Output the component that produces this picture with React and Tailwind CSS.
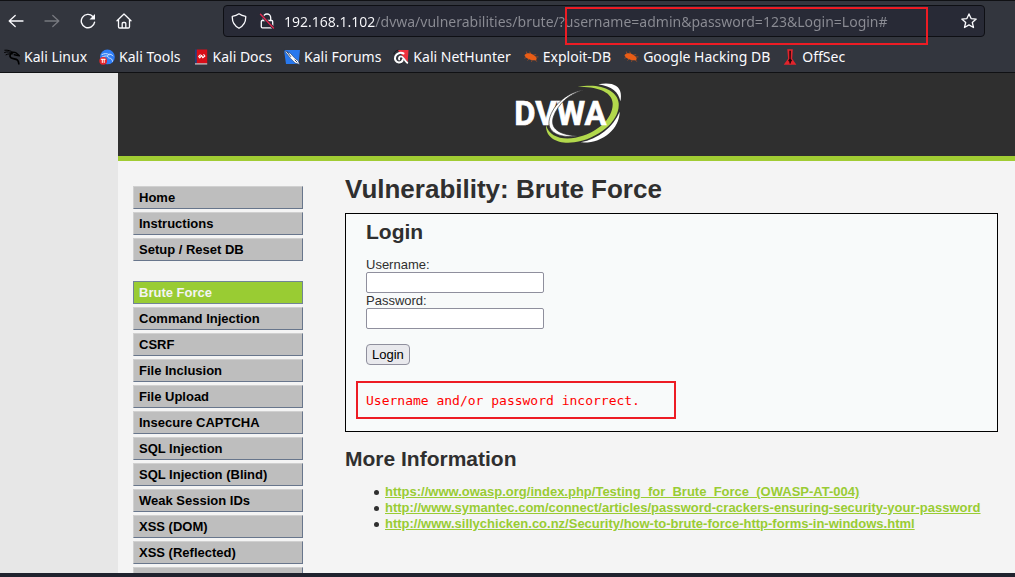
import React from "react";

const menuGroups = [
  ["Home", "Instructions", "Setup / Reset DB"],
  [
    "Brute Force",
    "Command Injection",
    "CSRF",
    "File Inclusion",
    "File Upload",
    "Insecure CAPTCHA",
    "SQL Injection",
    "SQL Injection (Blind)",
    "Weak Session IDs",
    "XSS (DOM)",
    "XSS (Reflected)",
    "",
  ],
];

const references = [
  "https://www.owasp.org/index.php/Testing_for_Brute_Force_(OWASP-AT-004)",
  "http://www.symantec.com/connect/articles/password-crackers-ensuring-security-your-password",
  "http://www.sillychicken.co.nz/Security/how-to-brute-force-http-forms-in-windows.html",
];

function Icon({ children, className = "" }) {
  return (
    <svg
      viewBox="0 0 16 16"
      aria-hidden="true"
      className={`size-4 shrink-0 ${className}`}
      fill="none"
      stroke="currentColor"
      strokeWidth="1.3"
      strokeLinecap="round"
      strokeLinejoin="round"
    >
      {children}
    </svg>
  );
}

function KaliIcon() {
  return (
    <Icon className="text-black">
      <path d="M.8 1.2C4 .9 7 1.7 9.3 3.6M.6 3.4c2.600-.9 5.400-.7 8 .8M2 5.800c2-1 4-1.200 6.300-.8" strokeWidth="1" />
      <path d="M8 3.600C6 5 5.300 7.200 6.800 8.700c1.700 1.600 5 .8 6.700 2.400 1 .9 1.200 2.200 1.300 3.700" strokeWidth="1.700" />
      <path d="M8.600 3.400c1.700-.3 3.400.1 4.600 1.400l2.200 1.900-2.800-.5-2.300-.5" strokeWidth="1.500" />
    </Icon>
  );
}

function ToolsIcon() {
  return (
    <Icon>
      <circle cx="8.400" cy="7.900" r="7.400" fill="#2f7df6" stroke="none" />
      <path d="M3 5.500c2.500-1.300 5.200-1.200 7.200.2M3.300 8c1.800-1 3.600-1.300 5.500-.9M9.500 5.600c-1.700 1.600-.8 3.200 1 3.500 1.900.3 2.900 1.300 3 3.200M10 5.200c1.400-.3 2.800.4 3.900 1.700" stroke="#cfe4ff" strokeWidth="1" />
      <circle cx="4.200" cy="11.800" r="3.900" fill="#e3262b" stroke="none" />
      <path d="M2.200 10.300h4M3.300 10.300v3.200M5.200 10.300v3.200" stroke="#fff" strokeWidth="1" />
    </Icon>
  );
}

function DocsIcon() {
  return (
    <Icon>
      <path d="M2 .5h2v14H2z" fill="#23407c" stroke="none" />
      <path d="M3.800.5h10.400v14H3.800z" fill="#d80d18" stroke="none" />
      <path d="M2 14.300h12.200v1.200H2z" fill="#d9c9cc" stroke="none" />
      <path d="M7.300 5.800 5.700 7.400l1.100 1.400 1.900-2.400 1 2.400 2.200-1.800-1.100-1.400" stroke="#fff" strokeWidth="1.100" />
    </Icon>
  );
}

function ForumsIcon() {
  return (
    <Icon>
      <path d="M0 1h16l-1.500 14H2z" fill="#2878ee" stroke="none" />
      <path d="M.2 1.300 6.500 4.400l4.700 5.200 3 2.200 1.500 3.600-4.500-1.400-4.700-4.600-3.600-4.500L.2 1.300z" fill="#fff" stroke="#17335f" strokeWidth=".6" />
      <path d="m3.200 3 3.500 4.500M11 11l2 2" stroke="#1d3157" strokeWidth=".9" />
    </Icon>
  );
}

function NetHunterIcon() {
  return (
    <Icon>
      <path d="M4.500 1h11l-.8 12z" fill="#f0323c" stroke="none" />
      <path d="M.8 4.800C1.500 2.900 3 1.500 5 1.200M9 14l-2.500 1.200" stroke="#16171b" strokeWidth="1" />
      <path d="M10.500 4.500C7.500 3 3.500 4.200 2.300 7.400c-1 2.900.6 5.900 3.500 6.100 2.300.1 3.700-1.300 4-2.900" stroke="#fff" strokeWidth="2" />
      <path d="M6.200 10.500c-.7-1.700.3-3.200 1.900-3.200 2.200 0 2.900 3.600 6.200 6.500" stroke="#fff" strokeWidth="1.800" />
    </Icon>
  );
}

function BugIcon() {
  return (
    <Icon className="text-[#e95d16]">
      <path d="M1.500 6C3.500 3.700 7 3.600 9.800 5.400c2 1.300 4 2.700 3.900 4.300-.1 1.700-2.500 2-5 1.300C5.300 10.200 2 8.600 1.500 6z" fill="currentColor" stroke="none" />
      <path d="m4 5-.5-2M7.500 5l-.6-2M10.500 6l2.300-.4M12.500 8l2.500-.1M3.500 8.500l-1.800.6M6 10l-1.200 1.300M9 11l-.4 1.500M12 11l1.800 1.300" strokeWidth=".5" />
    </Icon>
  );
}

function OffSecIcon() {
  return (
    <Icon>
      <path d="M5.300.3h5.500l-.6 9.500 4.200 5.900H1.700l4.400-5.900z" fill="#e3242c" stroke="none" />
      <path d="M7.300 1.800h1.600l-.2 8 1.500 2-1.300 1v1.600H7.400v-1.600l-1.300-1 1.300-2z" fill="#25060a" stroke="none" />
    </Icon>
  );
}

const bookmarks = [
  ["Kali Linux", KaliIcon],
  ["Kali Tools", ToolsIcon],
  ["Kali Docs", DocsIcon],
  ["Kali Forums", ForumsIcon],
  ["Kali NetHunter", NetHunterIcon],
  ["Exploit-DB", BugIcon],
  ["Google Hacking DB", BugIcon],
  ["OffSec", OffSecIcon],
];

function Browser() {
  return (
    <header className="shrink-0 border-y border-[#101114] bg-[#33363e] font-['Noto_Sans',sans-serif] text-[#fbfbfe]">
      <div className="flex h-10 items-center pr-[30px] pl-2">
        <div className="flex w-[215px] shrink-0 items-center gap-5">
          <button aria-label="Back">
            <Icon><path d="M15 8H1.200M7.200 2.500 1.200 8l6 5.500" /></Icon>
          </button>
          <button aria-label="Forward" className="text-[#77797f]">
            <Icon><path d="M1 8h13.800M8.800 2.500l6 5.500-6 5.500" /></Icon>
          </button>
          <button aria-label="Reload">
            <Icon>
              <path d="M14.600 9.200A6.700 6.700 0 1 1 12.800 3.400l1.400 1.400" strokeWidth="1.400" />
              <path d="M15 1v5.500H9.500z" fill="currentColor" stroke="none" />
            </Icon>
          </button>
          <button aria-label="Home">
            <Icon>
              <path d="M1 7.800 8 1l7 6.800M2.500 6.500v7.300q0 1.200 1.200 1.200h8.600q1.200 0 1.200-1.200V6.500M6.200 14.800v-4.300q0-1 1-1h1.600q1 0 1 1v4.300" />
            </Icon>
          </button>
        </div>
        <div className="relative flex h-8 min-w-0 flex-1 items-center rounded border border-[#0e0f14] bg-[#282a36] px-[7px]">
          <Icon>
            <path d="M8 .8c2 1.600 4.200 2.300 6.700 2.500.3 5.300-1.500 9.200-6.700 12C2.800 12.500 1 8.600 1.300 3.300 3.800 3.100 6 2.400 8 .8z" />
          </Icon>
          <Icon className="ml-3">
            <path d="M4.300 7.500V4.700a3.700 3.700 0 0 1 7.400 0v2.800M3.300 7.500h9.400q1 0 1 1v5.300q0 1-1 1H3.300q-1 0-1-1V8.500q0-1 1-1z" />
            <path d="M1.500 1.300 14.500 15" stroke="#282a36" strokeWidth="3" />
            <path d="M1.500 1.300 14.500 15" stroke="#e22850" strokeWidth="1.400" />
          </Icon>
          <input
            type="text"
            aria-label="Address"
            defaultValue="192.168.1.102/dvwa/vulnerabilities/brute/?username=admin&password=123&Login=Login#"
            className="ml-[9px] min-w-0 flex-1 bg-[linear-gradient(to_right,#fbfbfe_91px,#8b8c94_91px)] bg-clip-text text-[14px] text-transparent outline-none"
          />
          <button aria-label="Bookmark this page">
            <Icon>
              <path d="m8 .9 2.100 4.700 5.100.5-3.900 3.400 1.200 5L8 11.900l-4.500 2.600 1.200-5L.8 6.100l5.100-.5z" />
            </Icon>
          </button>
          <div aria-hidden="true" className="pointer-events-none absolute top-px right-14 h-[38px] w-[363px] border-2 border-[#ed1c24]" />
        </div>
      </div>
      <nav aria-label="Bookmarks" className="flex h-[31px] items-center gap-3 px-1 text-[14px]">
        {bookmarks.map(([name, Mark]) => (
          <a key={name} href="#" className="flex items-center gap-1 whitespace-nowrap">
            <Mark />
            {name}
          </a>
        ))}
      </nav>
    </header>
  );
}

function Logo() {
  return (
    <svg viewBox="75 38 321 183" role="img" aria-label="DVWA" className="h-[61px] w-[107px]">
      <path d="M325 42C365 35 388 45 392 68q2 13-1 25C386 65 365 48 325 42z" fill="#fff" />
      <path d="M389 124C388 178 335 221 272 216 325 205 370 170 389 124z" fill="#fff" />
      <path d="M168 164C177 198 215 210 256 202 320 190 370 145 368 99 367 66 325 48 263 50 330 37 382 60 386 98 391 151 325 205 253 216 205 223 166 203 168 164z" fill="#b2d84c" />
      <text x="73" y="163" fontSize="98" fontWeight="700" fill="#fff" stroke="#fff" strokeWidth="2" fontFamily="'Liberation Sans Narrow', Roboto, sans-serif">DVWA</text>
      <path d="M282 58C238 70 203 101 190 140 180 174 205 193 262 197 214 204 174 189 177 154 182 111 227 66 282 58z" fill="#fff" stroke="#2f2f2f" strokeWidth="2" />
    </svg>
  );
}

function Menu() {
  return (
    <nav aria-label="Main menu" className="flex w-[170px] shrink-0 flex-col gap-5 pt-[25px]">
      {menuGroups.map((group) => (
        <ul key={group[0]} className="flex flex-col gap-[3px]">
          {group.map((item) => (
            <li key={item}>
              <a
                href="#"
                className={
                  item === "Brute Force"
                    ? "block h-[23px] border border-[#718495] bg-[#99cc33] px-[5px] leading-[22px] font-bold text-[#f4f4f4]"
                    : "block h-[23px] border border-t-[#d0d0d0] border-r-[#68768c] border-b-[#68768c] border-l-[#d0d0d0] bg-[#bebebe] px-[5px] leading-[22px] font-bold text-black"
                }
              >
                {item}
              </a>
            </li>
          ))}
        </ul>
      ))}
    </nav>
  );
}

function Field({ id, label, type }) {
  return (
    <div className="flex flex-col items-start">
      <label htmlFor={id} className="leading-[15px]">{label}</label>
      <input id={id} type={type} className="h-[21px] w-[178px] rounded-[2px] border border-[#8f8f9d] bg-white px-1" />
    </div>
  );
}

export default function App() {
  return (
    <div className="flex h-screen flex-col overflow-hidden bg-[#e7e7e7]">
      <Browser />
      <div className="min-h-0 flex-1 overflow-hidden pl-[118px] font-['Liberation_Sans',Arial,sans-serif] text-[13px] text-[#2f2f2f]">
        <div className="min-h-full bg-[#f4f4f4]">
          <div className="flex h-[88px] justify-center border-b-5 border-[#a1cc33] bg-[#2f2f2f] pt-[10px] pl-1">
            <Logo />
          </div>
          <div className="flex gap-[42px] pr-[17px] pl-[15px]">
            <Menu />
            <main className="min-w-0 flex-1 pt-[13px]">
              <h1 className="text-[26px] leading-[30px] font-bold">Vulnerability: Brute Force</h1>
              <section className="mt-[9px] border border-black bg-[#f8fafa] px-5 pt-[6px] pb-3">
                <h2 className="text-[21px] leading-6 font-bold">Login</h2>
                <form className="mt-[13px]" onSubmit={(e) => e.preventDefault()}>
                  <Field id="username" label="Username:" type="text" />
                  <Field id="password" label="Password:" type="password" />
                  <button className="mt-[15px] block h-[21px] rounded border border-[#8f8f9d] bg-[#e9e9ed] px-[5px] leading-[19px] text-black">
                    Login
                  </button>
                </form>
                <pre className="mt-4 -ml-[10px] h-[38px] w-[320px] border-2 border-[#ed1c24] pl-2 font-['DejaVu_Sans_Mono',monospace] leading-[36px] text-[#ff0000]">
                  Username and/or password incorrect.
                </pre>
              </section>
              <h2 className="mt-[15px] text-[21px] leading-6 font-bold">More Information</h2>
              <ul className="mt-[13px] pl-[29px]">
                {references.map((url) => (
                  <li key={url} className="flex items-center gap-[6px] leading-4 before:size-[5px] before:shrink-0 before:rounded-full before:bg-[#2f2f2f]">
                    <a href={url} className="font-bold whitespace-nowrap text-[#99cc33] underline">
                      {url}
                    </a>
                  </li>
                ))}
              </ul>
            </main>
          </div>
        </div>
      </div>
      <div className="h-1 shrink-0 bg-[#20232e]" />
    </div>
  );
}
